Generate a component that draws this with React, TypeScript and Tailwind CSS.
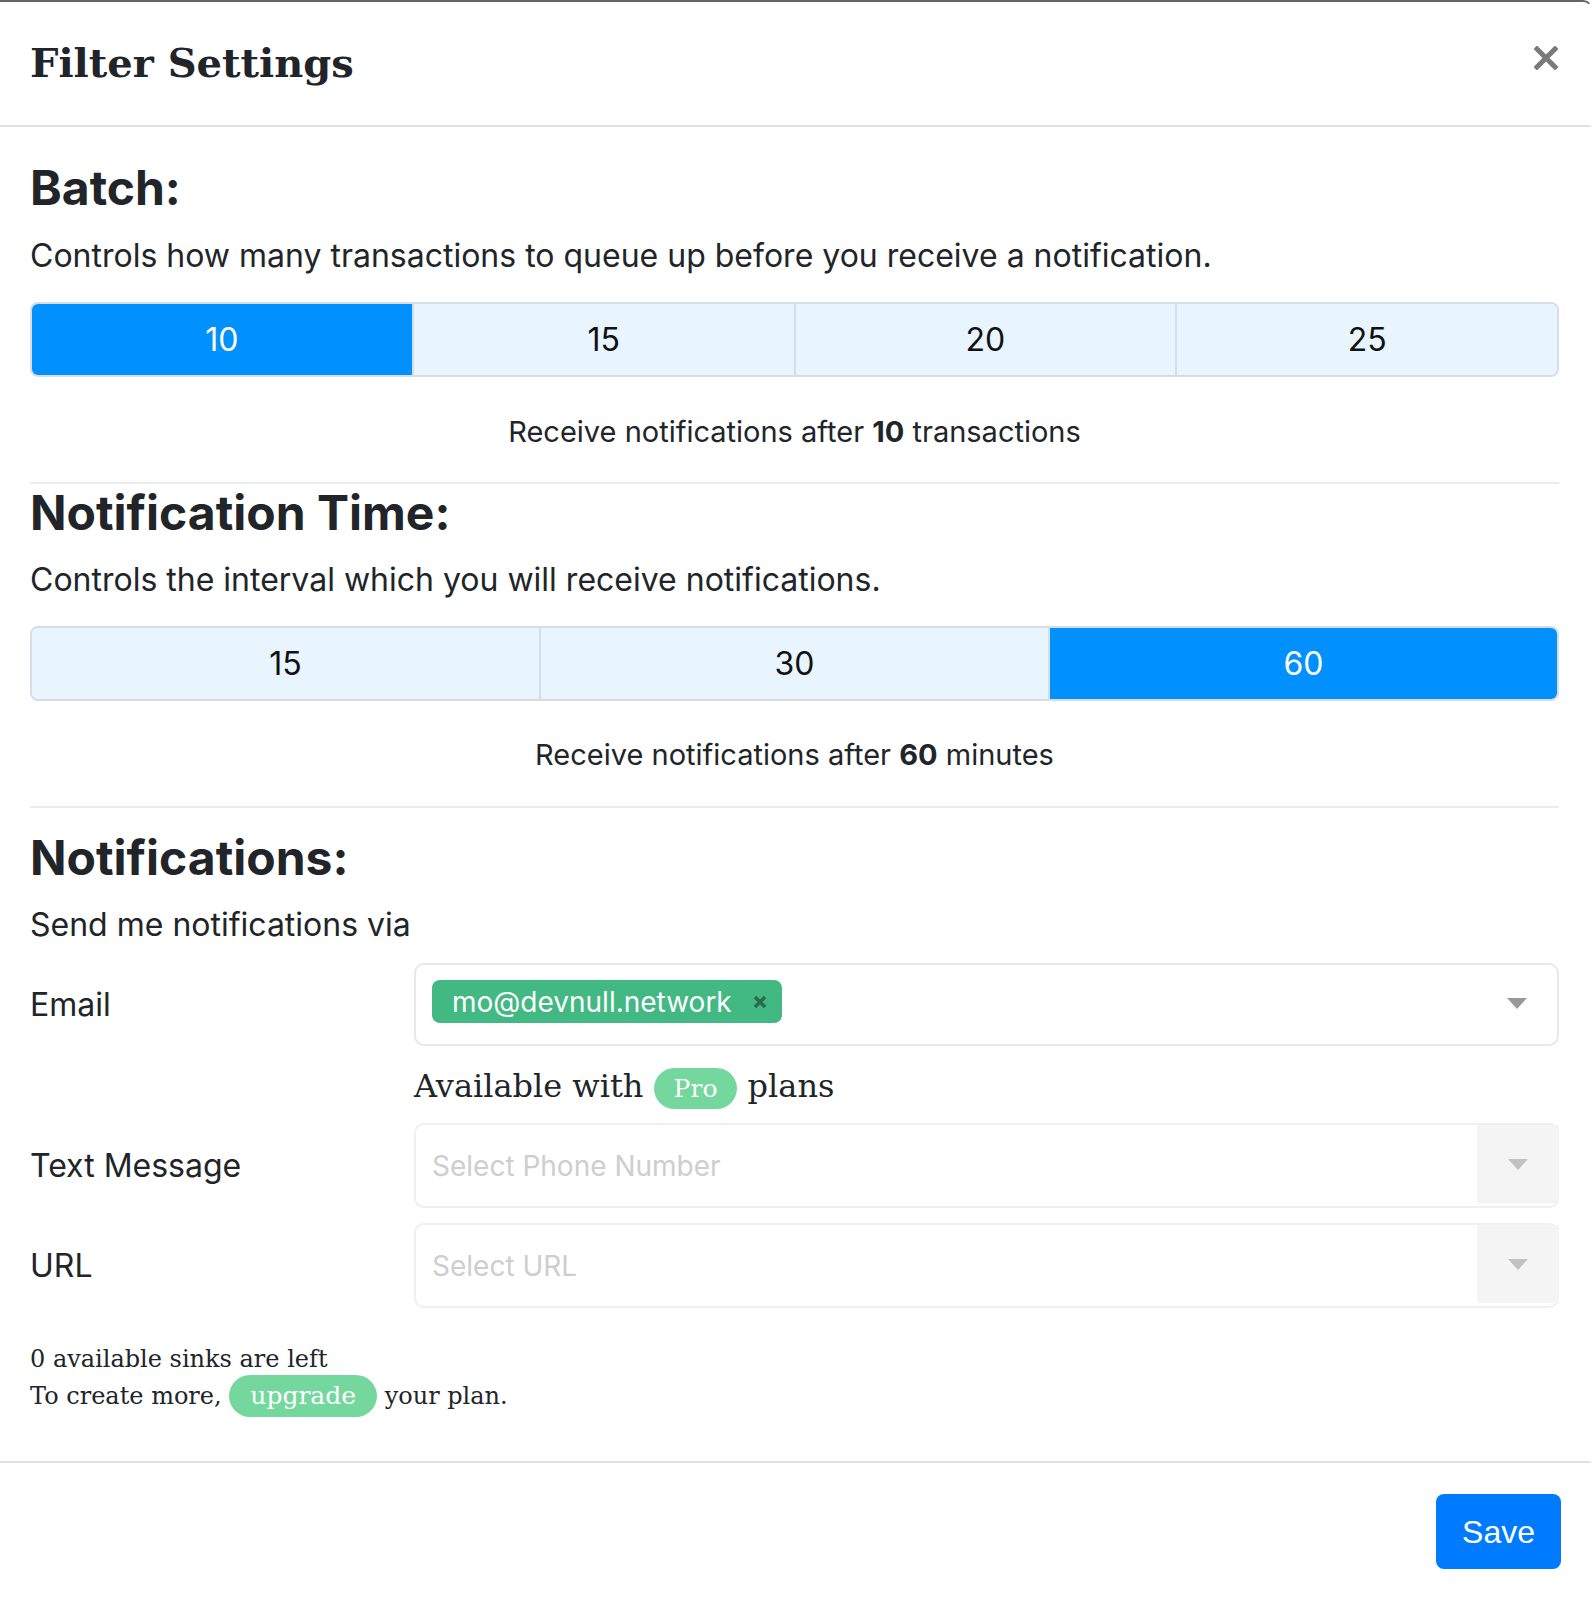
import clsx from 'clsx'

const BATCH = [10, 15, 20, 25]
const TIMES = [15, 30, 60]

const sans = "font-['Inter',sans-serif]"
const serif = "font-['DejaVu_Serif',serif]"

function Segmented({ options, value }: { options: number[]; value: number }) {
  return (
    <div className="flex h-[75px] overflow-hidden rounded-[8px] border-2 border-[#d5dde5]">
      {options.map((o, i) => (
        <button
          key={o}
          type="button"
          className={clsx(
            'flex-1 text-[32px] leading-none',
            i > 0 && 'border-l-2 border-[#d5dde5]',
            o === value ? 'bg-[#0091ff] text-white' : 'bg-[#e8f4fe] text-[#111]',
          )}
        >
          {o}
        </button>
      ))}
    </div>
  )
}

function Caret({ color }: { color: string }) {
  return (
    <svg width="20" height="11" viewBox="0 0 20 11" className="block">
      <polygon points="0,0 20,0 10,11" fill={color} />
    </svg>
  )
}

function DisabledSelect({ placeholder }: { placeholder: string }) {
  return (
    <div className="relative h-[85px] rounded-[10px] bg-[#f4f4f4]">
      <div className="flex h-full items-center rounded-[10px] border-2 border-[#f0f0f0] bg-white px-4">
        <span className="text-[28px] text-[#cecece]">{placeholder}</span>
      </div>
      <div className="absolute right-0 top-[2px] flex h-[78px] w-[82px] items-center justify-center bg-[#f4f4f4]">
        <Caret color="#c2c2c2" />
      </div>
    </div>
  )
}

export default function App() {
  return (
    <div className={clsx('min-h-screen bg-white text-[#212529]', sans)}>
      <div className="rounded-tr-[10px] border-r-2 border-t-2 border-[#666] border-r-transparent">
        {/* header */}
        <div className="flex items-center justify-between border-b-2 border-[#dee2e6] pb-[32px] pl-[30px] pr-[33px] pt-[31px]">
          <h5 className={clsx('text-[40px] font-bold leading-[60px]', serif)}>Filter Settings</h5>
          <button type="button" className="mb-[10px]" aria-label="Close">
            <svg width="24" height="24" viewBox="0 0 24 24" className="block">
              <path d="M3 3L21 21M21 3L3 21" stroke="#7b7b7b" strokeWidth="5" strokeLinecap="square" />
            </svg>
          </button>
        </div>

        {/* body */}
        <div className="pb-[46px] pl-[30px] pr-[32px] pt-[32px]">
          <h4 className="mb-[15px] text-[48px] font-bold leading-[58px]">Batch:</h4>
          <p className="mb-[22px] text-[32px] leading-[48px]">
            Controls how many transactions to queue up before you receive a notification.
          </p>
          <Segmented options={BATCH} value={10} />
          <p className="mt-[34px] text-center text-[29px] leading-[42px]">
            Receive notifications after <b>10</b> transactions
          </p>
          <hr className="mt-[29px] border-t-2 border-[#ebebeb]" />

          <h4 className="mb-[14px] text-[48px] font-bold leading-[58px]">Notification Time:</h4>
          <p className="mb-[22px] text-[32px] leading-[48px]">
            Controls the interval which you will receive notifications.
          </p>
          <Segmented options={TIMES} value={60} />
          <p className="mt-[33px] text-center text-[29px] leading-[42px]">
            Receive notifications after <b>60</b> minutes
          </p>
          <hr className="mt-[30px] border-t-2 border-[#ebebeb]" />

          <h4 className="mb-[14px] mt-[21px] text-[48px] font-bold leading-[58px]">Notifications:</h4>
          <p className="mb-[14px] text-[32px] leading-[48px]">Send me notifications via</p>

          <div className="grid grid-cols-[384px_1fr] items-center">
            <label className="text-[32px] leading-[48px]">Email</label>
            <div className="flex h-[83px] items-start justify-between rounded-[10px] border-2 border-[#e8e8e8] pl-4 pr-[30px] pt-[15px]">
              <span className="flex h-[43px] items-center rounded-[8px] bg-[#42b883] pl-[20px] pr-[15px] text-[28px] text-white">
                mo@devnull.network
                <svg width="14" height="14" viewBox="0 0 14 14" className="ml-[21px] block">
                  <path d="M2 2L12 12M12 2L2 12" stroke="#2a6b4d" strokeWidth="3.5" />
                </svg>
              </span>
              <div className="mt-[18px]">
                <Caret color="#999" />
              </div>
            </div>

            <div />
            <div className={clsx('mt-[16px] text-[32px] leading-[48px]', serif)}>
              Available with{' '}
              <span className="inline-block h-[41px] rounded-full bg-[#74d89e] px-[20px] text-[25px] leading-[41px] text-white">
                Pro
              </span>{' '}
              plans
            </div>

            <label className="mt-[13px] text-[32px] leading-[48px]">Text Message</label>
            <div className="mt-[13px]">
              <DisabledSelect placeholder="Select Phone Number" />
            </div>

            <label className="mt-[15px] text-[32px] leading-[48px]">URL</label>
            <div className="mt-[15px]">
              <DisabledSelect placeholder="Select URL" />
            </div>
          </div>

          <div className={clsx('mt-[33px] text-[24px] leading-[37px]', serif)}>
            <div>0 available sinks are left</div>
            <div>
              To create more,{' '}
              <span className="my-[-3px] inline-block h-[42px] rounded-full bg-[#74d89e] px-[21px] text-[25px] leading-[42px] text-white">
                upgrade
              </span>{' '}
              your plan.
            </div>
          </div>
        </div>

        {/* footer */}
        <div className="flex justify-end border-t-2 border-[#dee2e6] pb-[30px] pr-[30px] pt-[31px]">
          <button
            type="button"
            className="h-[75px] w-[125px] rounded-[8px] bg-[#007bff] font-['Liberation_Sans',sans-serif] text-[32px] text-white"
          >
            Save
          </button>
        </div>
      </div>
    </div>
  )
}
